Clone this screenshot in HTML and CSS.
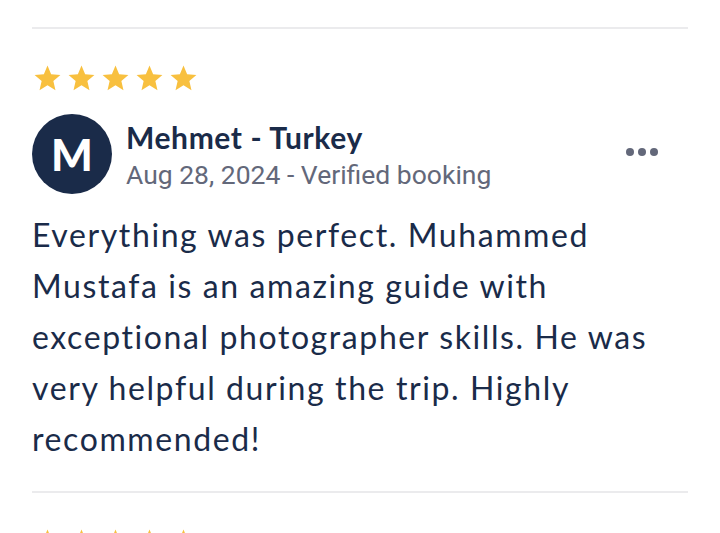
FILE: index.html
```html
<!DOCTYPE html>
<html lang="en">
<head>
<meta charset="utf-8">
<title>Review</title>
<link rel="stylesheet" href="styles.css">
</head>
<body>
<div class="reviews">
  <hr class="divider">
  <article class="review">
    <div class="stars">
      <svg viewBox="0 0 24 24"><path d="M12 17.27L18.18 21l-1.64-7.03L22 9.24l-7.19-.61L12 2 9.19 8.63 2 9.24l5.46 4.73L5.82 21z"/></svg>
      <svg viewBox="0 0 24 24"><path d="M12 17.27L18.18 21l-1.64-7.03L22 9.24l-7.19-.61L12 2 9.19 8.63 2 9.24l5.46 4.73L5.82 21z"/></svg>
      <svg viewBox="0 0 24 24"><path d="M12 17.27L18.18 21l-1.64-7.03L22 9.24l-7.19-.61L12 2 9.19 8.63 2 9.24l5.46 4.73L5.82 21z"/></svg>
      <svg viewBox="0 0 24 24"><path d="M12 17.27L18.18 21l-1.64-7.03L22 9.24l-7.19-.61L12 2 9.19 8.63 2 9.24l5.46 4.73L5.82 21z"/></svg>
      <svg viewBox="0 0 24 24"><path d="M12 17.27L18.18 21l-1.64-7.03L22 9.24l-7.19-.61L12 2 9.19 8.63 2 9.24l5.46 4.73L5.82 21z"/></svg>
    </div>
    <header class="author">
      <div class="avatar">M</div>
      <div class="meta">
        <div class="name">Mehmet - Turkey</div>
        <div class="date">Aug 28, 2024 - Verified booking</div>
      </div>
      <button class="more" aria-label="More options"><span></span><span></span><span></span></button>
    </header>
    <p class="text">Everything was perfect. Muhammed Mustafa is an amazing guide with exceptional photographer skills. He was very helpful during the trip. Highly recommended!</p>
  </article>
  <hr class="divider">
  <article class="review">
    <div class="stars">
      <svg viewBox="0 0 24 24"><path d="M12 17.27L18.18 21l-1.64-7.03L22 9.24l-7.19-.61L12 2 9.19 8.63 2 9.24l5.46 4.73L5.82 21z"/></svg>
      <svg viewBox="0 0 24 24"><path d="M12 17.27L18.18 21l-1.64-7.03L22 9.24l-7.19-.61L12 2 9.19 8.63 2 9.24l5.46 4.73L5.82 21z"/></svg>
      <svg viewBox="0 0 24 24"><path d="M12 17.27L18.18 21l-1.64-7.03L22 9.24l-7.19-.61L12 2 9.19 8.63 2 9.24l5.46 4.73L5.82 21z"/></svg>
      <svg viewBox="0 0 24 24"><path d="M12 17.27L18.18 21l-1.64-7.03L22 9.24l-7.19-.61L12 2 9.19 8.63 2 9.24l5.46 4.73L5.82 21z"/></svg>
      <svg viewBox="0 0 24 24"><path d="M12 17.27L18.18 21l-1.64-7.03L22 9.24l-7.19-.61L12 2 9.19 8.63 2 9.24l5.46 4.73L5.82 21z"/></svg>
    </div>
  </article>
</div>
</body>
</html>
```

FILE: styles.css
```css
html, body {
  margin: 0;
  padding: 0;
  background: #ffffff;
}
body {
  font-family: Lato, "Noto Sans", sans-serif;
  color: #1a2b49;
  overflow: hidden;
  height: 533px;
}
.reviews {
  padding: 27px 32px 0;
}
.divider {
  margin: 0;
  border: 0;
  height: 2px;
  background: #ebebed;
}
.review {
  padding-top: 34px;
}
.stars {
  display: flex;
  gap: 3px;
  height: 31px;
}
.stars svg {
  width: 31px;
  height: 31px;
  fill: #f8c03f;
  display: block;
}
.author {
  display: flex;
  align-items: center;
  margin-top: 19px;
}
.avatar {
  width: 80px;
  height: 80px;
  flex: none;
  border-radius: 50%;
  background: #1a2b49;
  color: #ffffff;
  font-weight: 900;
  font-size: 44px;
  display: flex;
  align-items: center;
  justify-content: center;
}
.meta {
  flex: 1;
  margin-left: 14px;
  padding-top: 6px;
}
.name {
  font-size: 30px;
  font-weight: 700;
  line-height: 36px;
  letter-spacing: 0.6px;
}
.date {
  font-family: Roboto, "Liberation Sans", sans-serif;
  font-size: 26.5px;
  line-height: 39px;
  color: #63687a;
}
.more {
  background: none;
  border: 0;
  padding: 0;
  margin: 0 30px 4px 0;
  display: flex;
  gap: 4px;
  align-self: center;
}
.more span {
  width: 8px;
  height: 8px;
  border-radius: 50%;
  background: #63687a;
}
.text {
  margin: 15px 0 27px;
  font-size: 32px;
  line-height: 51px;
  letter-spacing: 1.6px;
}
```
